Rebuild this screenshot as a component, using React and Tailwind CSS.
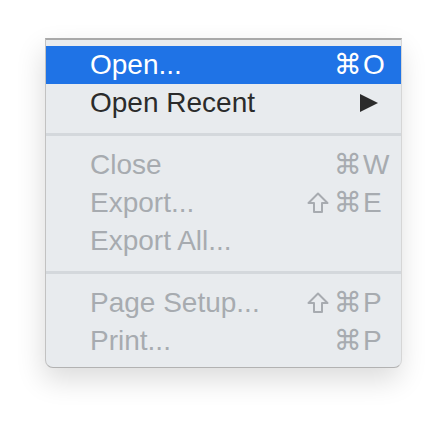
const items = [
  { label: "Open...", key: "O", active: true },
  { label: "Open Recent", submenu: true },
  { sep: true },
  { label: "Close", key: "W", disabled: true },
  { label: "Export...", shift: true, key: "E", disabled: true },
  { label: "Export All...", disabled: true },
  { sep: true },
  { label: "Page Setup...", shift: true, key: "P", disabled: true },
  { label: "Print...", key: "P", disabled: true },
];

const ShiftIcon = () => (
  <svg className="mr-[5px]" width="22" height="22" viewBox="0 0 22 22">
    <path
      d="M11 1.5 L20.5 11 H15 V20 H7 V11 H1.5 Z"
      fill="none"
      stroke="currentColor"
      strokeWidth="2"
      strokeLinejoin="round"
    />
  </svg>
);

const MenuRow = ({ item }) => {
  const color = item.active
    ? "bg-[#1f73e6] text-white"
    : item.disabled
    ? "text-[#a7abb0]"
    : "text-[#2b2b2b]";

  return (
    <div className={`flex items-center h-[38px] pl-[44px] ${color}`}>
      <span className="whitespace-nowrap">{item.label}</span>
      {item.submenu && (
        <svg
          className="ml-auto mr-[23px]"
          width="18"
          height="18"
          viewBox="0 0 18 18"
        >
          <polygon points="0,0 18,9 0,18" fill="#2b2b2b" />
        </svg>
      )}
      {item.key && (
        <div className="ml-auto flex items-center">
          {item.shift && <ShiftIcon />}
          <span className="whitespace-nowrap">⌘</span>
          <span className="w-[39px] pl-[1px] text-left">{item.key}</span>
        </div>
      )}
    </div>
  );
};

export default function App() {
  return (
    <div className="min-h-screen bg-white pt-[38px] pl-[45px] font-['Liberation_Sans','DejaVu_Sans',sans-serif]">
      <div className="w-[357px] bg-[#e8ebee] border-t-2 border-t-[#a9a9a9] border-l border-l-[#c2c2c2] border-r border-r-[#d6d6d6] border-b border-b-[#b2b2b2] rounded-b-[8px] pt-[6px] pb-[7px] text-[28px] leading-[38px] shadow-[-2px_12px_28px_rgba(0,0,0,0.14)]">
        {items.map((item, i) =>
          item.sep ? (
            <div key={i} className="py-[10.5px]">
              <div className="h-[3px] bg-[#d4d8dc]" />
            </div>
          ) : (
            <MenuRow key={i} item={item} />
          )
        )}
      </div>
    </div>
  );
}
